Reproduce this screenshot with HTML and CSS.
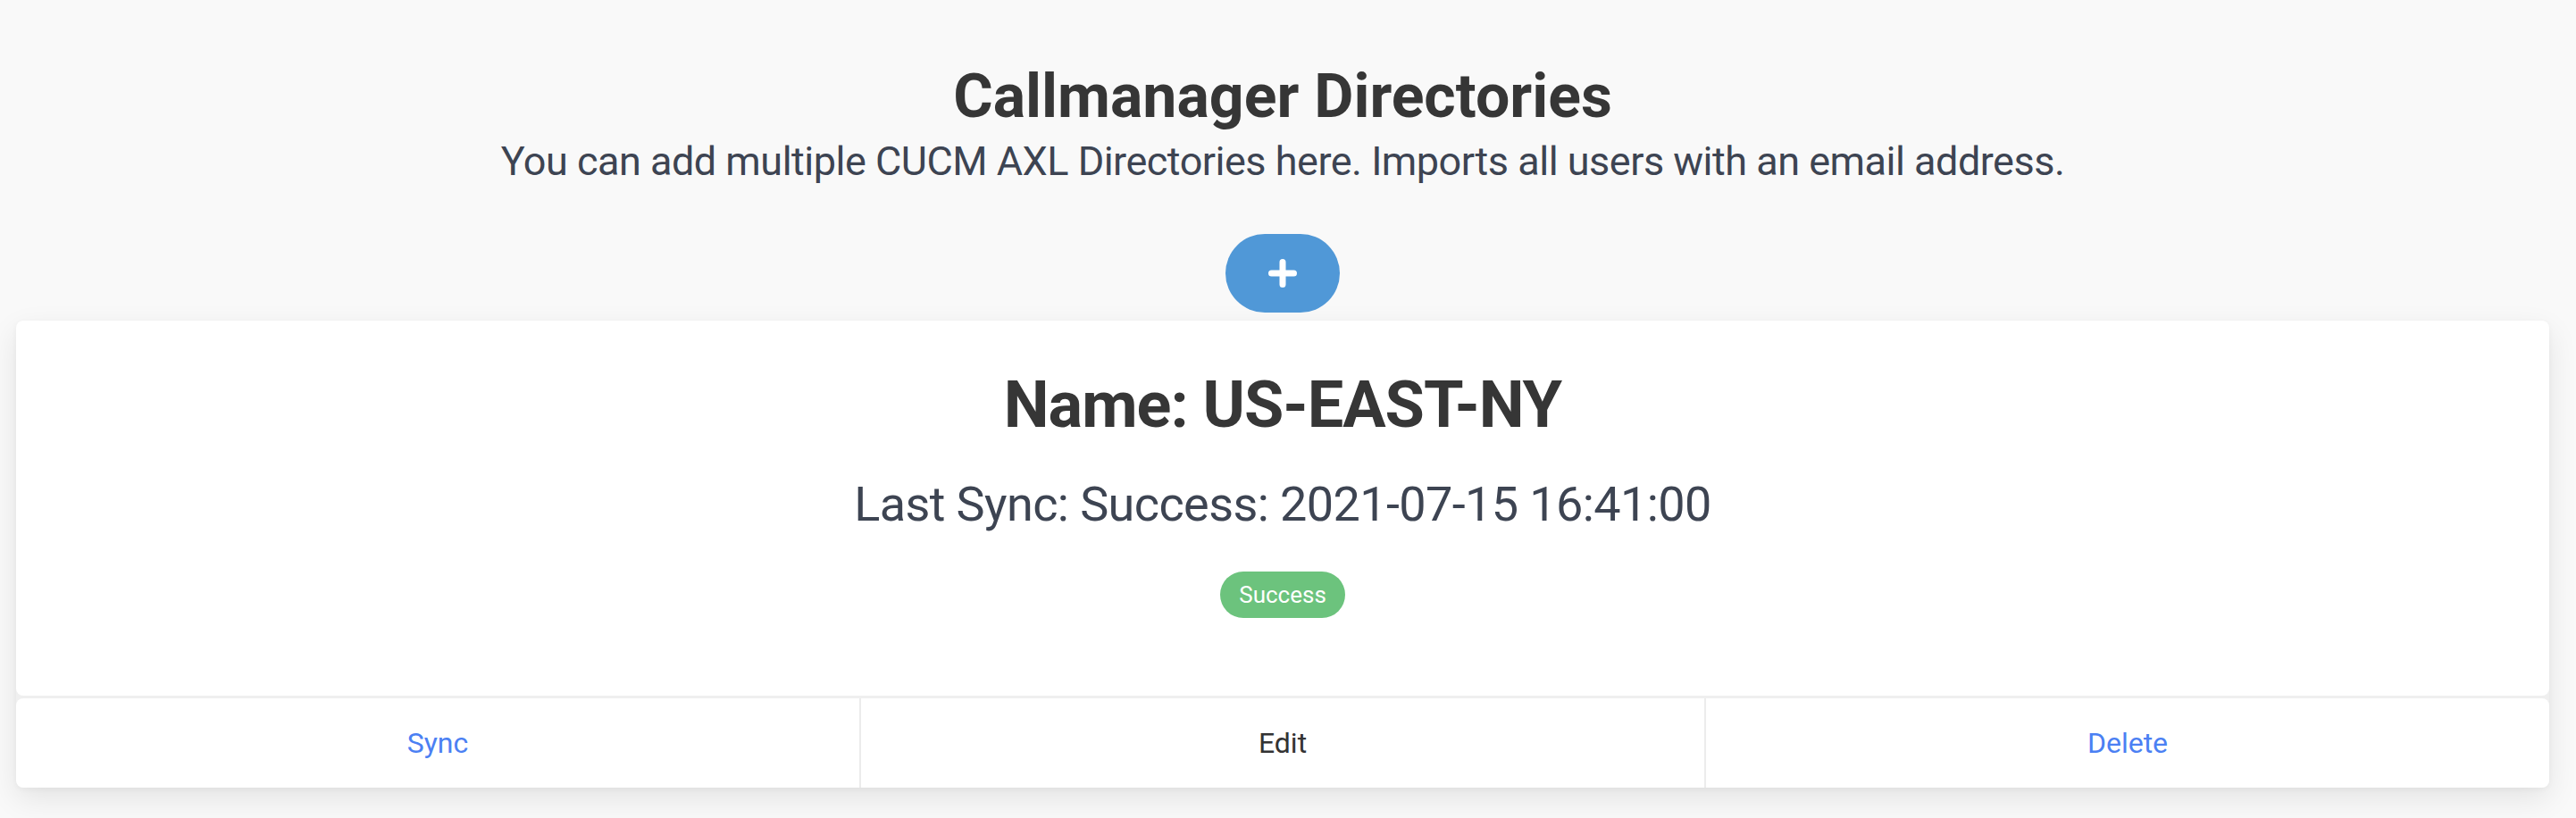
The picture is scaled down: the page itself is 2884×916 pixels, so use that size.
FILE: index.html
```html
<!DOCTYPE html>
<html lang="en">
<head>
<meta charset="utf-8">
<title>Callmanager Directories</title>
<link rel="stylesheet" href="styles.css">
</head>
<body>
<main class="page">
  <header class="page-head">
    <h1 class="page-title">Callmanager Directories</h1>
    <p class="page-sub">You can add multiple CUCM AXL Directories here. Imports all users with an email address.</p>
    <button class="add-btn" type="button" aria-label="Add directory">
      <svg class="add-icon" viewBox="0 0 32 32" width="32" height="32"><path d="M3.5 16H28.5M16 3.5V28.5" stroke="#fff" stroke-width="7" stroke-linecap="round" fill="none"/></svg>
    </button>
  </header>
  <section class="card">
    <div class="card-body">
      <h2 class="card-name">Name: US-EAST-NY</h2>
      <p class="card-sync">Last Sync: Success: 2021-07-15 16:41:00</p>
      <span class="badge">Success</span>
    </div>
    <div class="card-actions">
      <a class="action action-link">Sync</a>
      <a class="action action-plain">Edit</a>
      <a class="action action-link">Delete</a>
    </div>
  </section>
</main>
</body>
</html>
```
FILE: styles.css
```css
* { box-sizing: border-box; }
html, body { margin: 0; padding: 0; }
body {
  background: #f9f9f9;
  font-family: Roboto, "Liberation Sans", sans-serif;
  width: 2884px;
  height: 916px;
  overflow: hidden;
}
.page {
  padding: 68px 30px 0 18px;
}
.page-head {
  display: flex;
  flex-direction: column;
  align-items: center;
}
.page-title {
  margin: 0;
  font-size: 68px;
  line-height: 80px;
  font-weight: 700;
  color: #363636;
}
.page-sub {
  margin: 6px 0 0;
  font-size: 45px;
  line-height: 54px;
  font-weight: 400;
  letter-spacing: -0.5px;
  color: #3d4452;
}
.add-btn {
  margin-top: 54px;
  width: 128px;
  height: 88px;
  border: none;
  border-radius: 44px;
  background: #5098d7;
  display: flex;
  align-items: center;
  justify-content: center;
  padding: 0;
}
.add-icon { display: block; }
.card {
  margin-top: 9px;
  display: flex;
  flex-direction: column;
  gap: 3px;
  border-radius: 8px;
  background: #efefef;
  box-shadow: 0 12px 34px rgba(0, 0, 0, 0.09), 0 2px 6px rgba(0, 0, 0, 0.04);
}
.card-body {
  background: #fff;
  border-radius: 8px;
  padding: 53px 0 87px;
  display: flex;
  flex-direction: column;
  align-items: center;
}
.card-name {
  margin: 0;
  font-size: 72px;
  line-height: 84px;
  font-weight: 700;
  letter-spacing: -1px;
  color: #363636;
}
.card-sync {
  margin: 37px 0 0;
  font-size: 54px;
  line-height: 64px;
  font-weight: 400;
  letter-spacing: -0.6px;
  color: #3d4452;
}
.badge {
  margin-top: 43px;
  height: 52px;
  line-height: 52px;
  padding: 0 21px;
  border-radius: 26px;
  background: #6cc37d;
  color: #fff;
  font-size: 26px;
}
.card-actions {
  display: flex;
  background: #fff;
  border-radius: 8px;
  height: 100px;
}
.action {
  flex: 1;
  text-align: center;
  font-size: 32px;
  line-height: 100px;
  cursor: pointer;
}
.action + .action { border-left: 2px solid #ececec; }
.action-link { color: #4b80f3; }
.action-plain { color: #333; }
```
